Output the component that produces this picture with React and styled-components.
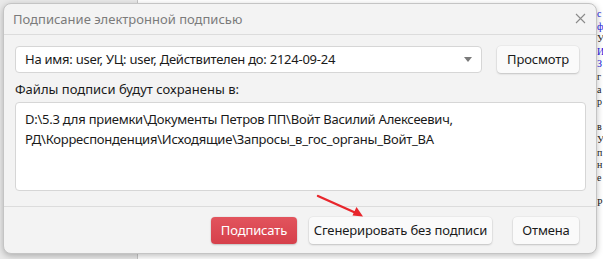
import React from 'react'
import styled, { createGlobalStyle } from 'styled-components'

const Global = createGlobalStyle`
  html, body { margin: 0; padding: 0; background: #fff; }
  * { box-sizing: border-box; }
`

const Page = styled.div`
  position: relative;
  width: 603px;
  height: 259px;
  display: flex;
  overflow: hidden;
  font-family: "Noto Sans", "Open Sans", sans-serif;
`

const SidePane = styled.div`
  width: 138px;
  background: #e9e9e9;
  border-right: 1px solid #c6c6c6;
`

const DocPane = styled.div`
  flex: 1;
  background: #fff;
  display: flex;
  justify-content: flex-end;
  padding-top: 8px;
`

const DocColumn = styled.div`
  width: 6px;
  font-family: "Liberation Serif", serif;
  font-size: 10px;
  line-height: 12.6px;
  white-space: nowrap;
  overflow: hidden;
`

const DocLine = styled.div`
  height: 12.6px;
  color: ${p => (p.link ? '#1a1ae0' : '#222')};
`

const Dialog = styled.div`
  position: absolute;
  left: 3px;
  top: 3px;
  width: 594px;
  height: 251px;
  background: #f3f3f3;
  border: 1px solid #c4c4c4;
  border-radius: 8px;
  box-shadow: 0 2px 6px rgba(0, 0, 0, 0.25);
  display: flex;
  flex-direction: column;
`

const TitleBar = styled.div`
  height: 31px;
  display: flex;
  align-items: center;
  justify-content: space-between;
  padding: 0 10px 0 9px;
  border-bottom: 1px solid #dcdcdc;
  color: #7b7b7b;
  font-size: 13px;
`

const Close = styled.span`
  color: #8a8a8a;
  display: flex;
`

const Body = styled.div`
  flex: 1;
  padding: 11px 10px 0 11px;
  display: flex;
  flex-direction: column;
`

const Row = styled.div`
  display: flex;
  gap: 15px;
  padding-right: 7px;
`

const Select = styled.div`
  flex: 1;
  height: 27px;
  background: #fff;
  border: 1px solid #d6d6d6;
  border-radius: 4px;
  display: flex;
  align-items: center;
  justify-content: space-between;
  padding: 0 9px 0 9px;
  font-size: 13px;
  letter-spacing: -0.25px;
  color: #1a1a1a;
`

const Caret = styled.span`
  width: 0;
  height: 0;
  border-left: 4.5px solid transparent;
  border-right: 4.5px solid transparent;
  border-top: 5px solid #7a7a7a;
`

const Button = styled.button`
  height: 27px;
  width: ${p => p.w}px;
  padding: 0;
  margin-left: ${p => p.gap || 0}px;
  border: none;
  border-radius: 4px;
  font-family: inherit;
  font-size: 13px;
  letter-spacing: -0.15px;
  background: ${p => (p.primary ? 'linear-gradient(#e2545d, #d6404b)' : '#fafafa')};
  color: ${p => (p.primary ? '#fff' : '#1a1a1a')};
  box-shadow: 0 1px 2px rgba(0, 0, 0, 0.18), 0 0 0 0.5px rgba(0, 0, 0, 0.06);
`

const Label = styled.div`
  margin-top: 7px;
  font-size: 13px;
  line-height: 18px;
  color: #1a1a1a;
`

const PathBox = styled.div`
  margin-top: 4px;
  height: 89px;
  background: #fff;
  border: 1px solid #d6d6d6;
  border-radius: 4px;
  padding: 6px 9px;
  font-size: 13px;
  letter-spacing: -0.24px;
  line-height: 20px;
  color: #1a1a1a;
`

const Footer = styled.div`
  border-top: 1px solid #dcdcdc;
  margin-top: 15px;
  height: 48px;
  display: flex;
  justify-content: flex-end;
  align-items: flex-start;
  padding: 10px 17px 0 0;
`

const Arrow = styled.svg`
  position: absolute;
  left: 0;
  top: 0;
  pointer-events: none;
`

const docLines = [
  ['с', true], ['ф', true], ['У', false], ['И', true], ['З', true], ['г', false],
  ['а', false], ['р', false], ['', false], ['в', false], ['У', false], ['п', false],
  ['н', false], ['е', false], ['', false], ['Р', false],
]

const App = () => (
  <Page>
    <Global />
    <SidePane />
    <DocPane>
      <DocColumn>
        {docLines.map(([t, link], i) => (
          <DocLine key={i} link={link}>{t || '\u00a0'}</DocLine>
        ))}
      </DocColumn>
    </DocPane>
    <Dialog>
      <TitleBar>
        <span>Подписание электронной подписью</span>
        <Close>
          <svg width="11" height="11" viewBox="0 0 11 11">
            <path d="M1 1L10 10M10 1L1 10" stroke="#8a8a8a" strokeWidth="1.1" />
          </svg>
        </Close>
      </TitleBar>
      <Body>
        <Row>
          <Select>
            <span>На имя: user, УЦ: user, Действителен до: 2124-09-24</span>
            <Caret />
          </Select>
          <Button w={82}>Просмотр</Button>
        </Row>
        <Label>Файлы подписи будут сохранены в:</Label>
        <PathBox>
          D:\5.3 для приемки\Документы Петров ПП\Войт Василий Алексеевич,
          <br />
          РД\Корреспонденция\Исходящие\Запросы_в_гос_органы_Войт_ВА
        </PathBox>
      </Body>
      <Footer>
        <Button primary w={86}>Подписать</Button>
        <Button gap={12} w={183}>Сгенерировать без подписи</Button>
        <Button gap={21} w={66}>Отмена</Button>
      </Footer>
    </Dialog>
    <Arrow width="603" height="259">
      <line x1="318" y1="196" x2="356" y2="213" stroke="#e8262c" strokeWidth="2.4" strokeLinecap="round" />
      <path d="M363 216.5L352.5 215.5L356.5 207Z" fill="#e8262c" />
    </Arrow>
  </Page>
)

export default App
